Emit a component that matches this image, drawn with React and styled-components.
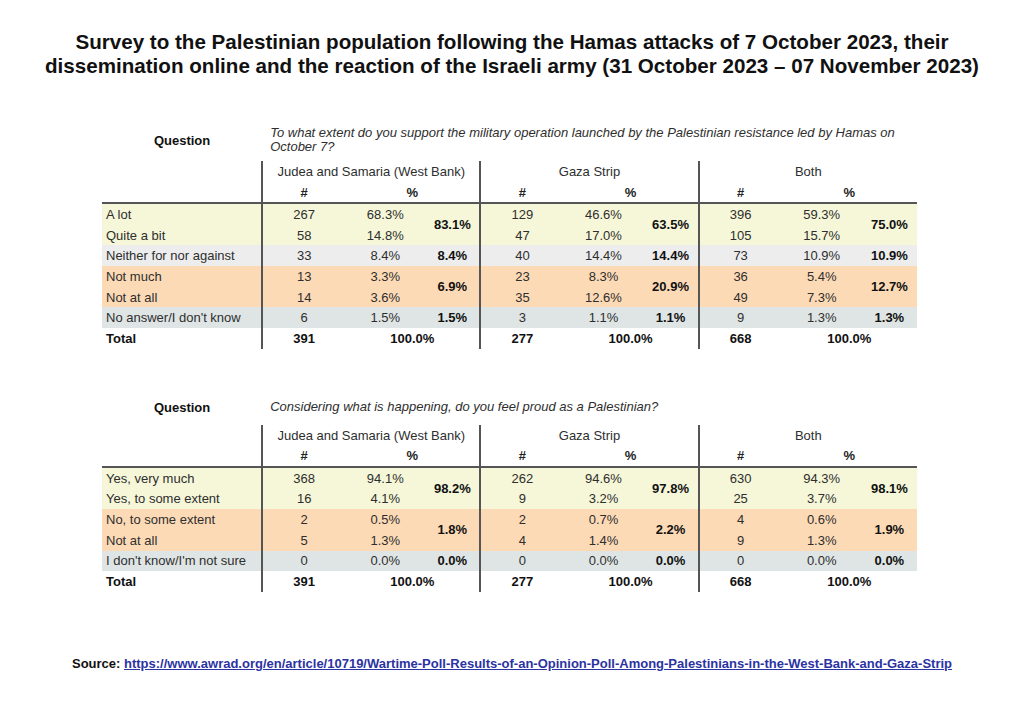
import React from 'react'
import styled, { createGlobalStyle } from 'styled-components'

const GlobalStyle = createGlobalStyle`
    body {
        margin: 0;
        background: white;
        font-family: "Liberation Sans", Arial, sans-serif;
    }
`

const colors = {
    yes: '#f5f7d8',
    neutral: '#ededed',
    no: '#fddab6',
    unknown: '#dfe5e4',
    line: '#555555',
    text: '#2e2e2e',
}

const Page = styled.div`
    width: 1024px;
    height: 706px;
    box-sizing: border-box;
    padding-top: 30px;
    color: ${colors.text};
`

const Title = styled.h1`
    margin: 0;
    font-size: 20.6px;
    line-height: 24px;
    font-weight: bold;
    color: #111;
    text-align: center;
`

const Table = styled.table`
    border-collapse: collapse;
    table-layout: fixed;
    width: 815px;
    margin: ${props => props.top}px 0 0 102px;
    font-size: 13px;
`

const QuestionLabel = styled.td`
    font-weight: bold;
    color: #111;
    text-align: center;
    vertical-align: middle;
    padding: 0;
    height: ${props => props.h}px;
`

const QuestionText = styled.td`
    font-style: italic;
    line-height: 14px;
    padding: 0 0 0 8px;
    vertical-align: middle;
`

const Spacer = styled.td`
    height: ${props => props.h}px;
    padding: 0;
`

const GroupHead = styled.td`
    text-align: center;
    height: 21px;
    padding: 0;
    border-left: 2px solid ${colors.line};
`

const SubHead = styled.td`
    text-align: center;
    font-weight: bold;
    color: #222;
    height: 20px;
    padding: 0;
    border-bottom: 2px solid ${colors.line};
    border-left: ${props => props.first ? `2px solid ${colors.line}` : 'none'};
`

const Label = styled.td`
    padding: 0 0 0 4px;
    height: 20.7px;
    white-space: nowrap;
    background: ${props => props.bg || 'transparent'};
    font-weight: ${props => props.bold ? 'bold' : 'normal'};
    color: ${props => props.bold ? '#111' : colors.text};
`

const Num = styled.td`
    padding: 0;
    text-align: center;
    background: ${props => props.bg || 'transparent'};
    font-weight: ${props => props.bold ? 'bold' : 'normal'};
    color: ${props => props.bold ? '#111' : colors.text};
    border-left: ${props => props.first ? `2px solid ${colors.line}` : 'none'};
`

const Source = styled.p`
    margin: 64px 0 0;
    text-align: center;
    font-size: 13px;
    font-weight: bold;
    color: #111;
    a {
        color: #2b33a3;
        text-decoration: underline;
    }
`

const groups = ['Judea and Samaria (West Bank)', 'Gaza Strip', 'Both']

const Cols = () => (
    <colgroup>
        <col style={{ width: 160 }} />
        {groups.map(g => (
            <React.Fragment key={g}>
                <col style={{ width: 83 }} />
                <col style={{ width: 80 }} />
                <col style={{ width: 55 }} />
            </React.Fragment>
        ))}
    </colgroup>
)

// each block: rows of [n, pct] per group, plus the block's summed pct per group
const SurveyTable = ({ question, questionHeight, gap, top, blocks, totals }) => (
    <Table top={top}>
        <Cols />
        <tbody>
            <tr>
                <QuestionLabel h={questionHeight}>Question</QuestionLabel>
                <QuestionText colSpan={9}>{question}</QuestionText>
            </tr>
            <tr>
                <Spacer h={gap} colSpan={10} />
            </tr>
            <tr>
                <td />
                {groups.map(g => <GroupHead key={g} colSpan={3}>{g}</GroupHead>)}
            </tr>
            <tr>
                <SubHead />
                {groups.map(g => (
                    <React.Fragment key={g}>
                        <SubHead first>#</SubHead>
                        <SubHead colSpan={2}>%</SubHead>
                    </React.Fragment>
                ))}
            </tr>
            {blocks.map(block => block.rows.map((row, i) => (
                <tr key={row.label}>
                    <Label bg={block.bg}>{row.label}</Label>
                    {row.values.map(([n, pct], g) => (
                        <React.Fragment key={g}>
                            <Num first bg={block.bg}>{n}</Num>
                            <Num bg={block.bg}>{pct}</Num>
                            {i === 0 && (
                                <Num bold bg={block.bg} rowSpan={block.rows.length}>
                                    {block.sums[g]}
                                </Num>
                            )}
                        </React.Fragment>
                    ))}
                </tr>
            )))}
            <tr>
                <Label bold>Total</Label>
                {totals.map(t => (
                    <React.Fragment key={t}>
                        <Num first bold>{t}</Num>
                        <Num bold colSpan={2}>100.0%</Num>
                    </React.Fragment>
                ))}
            </tr>
        </tbody>
    </Table>
)

const supportBlocks = [
    {
        bg: colors.yes,
        sums: ['83.1%', '63.5%', '75.0%'],
        rows: [
            { label: 'A lot', values: [['267', '68.3%'], ['129', '46.6%'], ['396', '59.3%']] },
            { label: 'Quite a bit', values: [['58', '14.8%'], ['47', '17.0%'], ['105', '15.7%']] },
        ],
    },
    {
        bg: colors.neutral,
        sums: ['8.4%', '14.4%', '10.9%'],
        rows: [
            { label: 'Neither for nor against', values: [['33', '8.4%'], ['40', '14.4%'], ['73', '10.9%']] },
        ],
    },
    {
        bg: colors.no,
        sums: ['6.9%', '20.9%', '12.7%'],
        rows: [
            { label: 'Not much', values: [['13', '3.3%'], ['23', '8.3%'], ['36', '5.4%']] },
            { label: 'Not at all', values: [['14', '3.6%'], ['35', '12.6%'], ['49', '7.3%']] },
        ],
    },
    {
        bg: colors.unknown,
        sums: ['1.5%', '1.1%', '1.3%'],
        rows: [
            { label: "No answer/I don't know", values: [['6', '1.5%'], ['3', '1.1%'], ['9', '1.3%']] },
        ],
    },
]

const prideBlocks = [
    {
        bg: colors.yes,
        sums: ['98.2%', '97.8%', '98.1%'],
        rows: [
            { label: 'Yes, very much', values: [['368', '94.1%'], ['262', '94.6%'], ['630', '94.3%']] },
            { label: 'Yes, to some extent', values: [['16', '4.1%'], ['9', '3.2%'], ['25', '3.7%']] },
        ],
    },
    {
        bg: colors.no,
        sums: ['1.8%', '2.2%', '1.9%'],
        rows: [
            { label: 'No, to some extent', values: [['2', '0.5%'], ['2', '0.7%'], ['4', '0.6%']] },
            { label: 'Not at all', values: [['5', '1.3%'], ['4', '1.4%'], ['9', '1.3%']] },
        ],
    },
    {
        bg: colors.unknown,
        sums: ['0.0%', '0.0%', '0.0%'],
        rows: [
            { label: "I don't know/I'm not sure", values: [['0', '0.0%'], ['0', '0.0%'], ['0', '0.0%']] },
        ],
    },
]

const url = 'https://www.awrad.org/en/article/10719/Wartime-Poll-Results-of-an-Opinion-Poll-Among-Palestinians-in-the-West-Bank-and-Gaza-Strip'

const App = () => {
    return <Page>
        <GlobalStyle />
        <Title>
            Survey to the Palestinian population following the Hamas attacks of 7 October 2023, their<br />
            dissemination online and the reaction of the Israeli army (31 October 2023 – 07 November 2023)
        </Title>

        <SurveyTable
            top={47}
            questionHeight={30}
            gap={6}
            question="To what extent do you support the military operation launched by the Palestinian resistance led by Hamas on October 7?"
            blocks={supportBlocks}
            totals={['391', '277', '668']}
        />

        <SurveyTable
            top={47}
            questionHeight={23}
            gap={6}
            question="Considering what is happening, do you feel proud as a Palestinian?"
            blocks={prideBlocks}
            totals={['391', '277', '668']}
        />

        <Source>
            Source: <a href={url}>{url}</a>
        </Source>
    </Page>
}

export default App
